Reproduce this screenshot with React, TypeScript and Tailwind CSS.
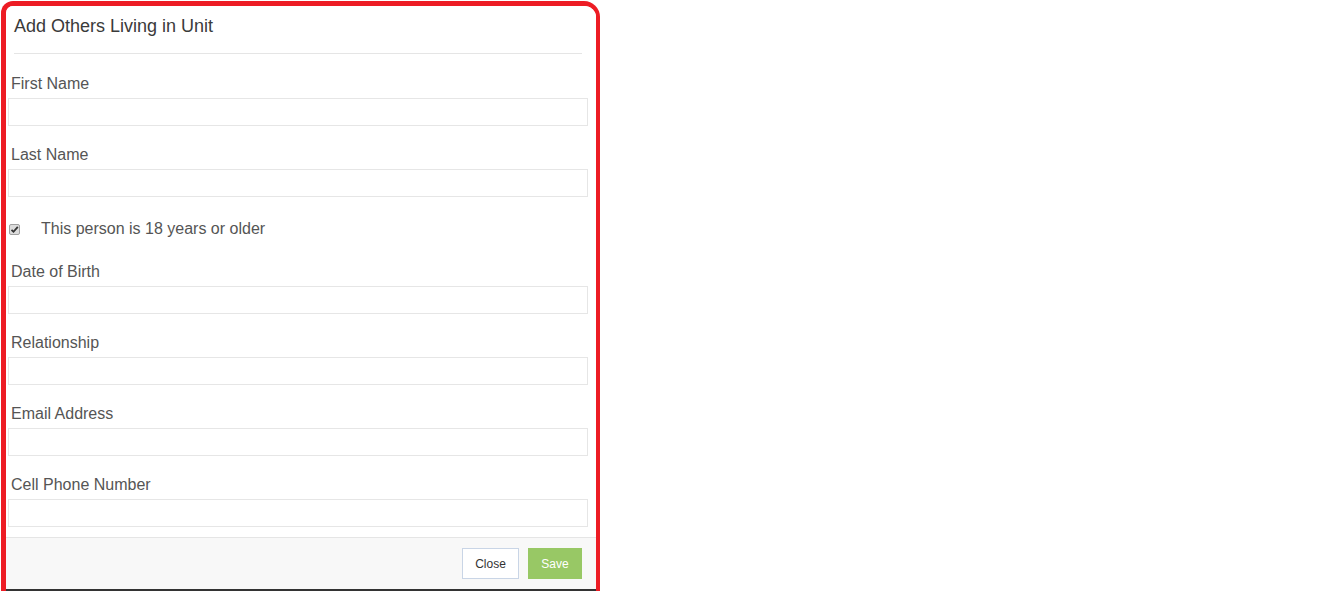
import React from "react";

const fields = ["First Name", "Last Name"];
const moreFields = ["Date of Birth", "Relationship", "Email Address", "Cell Phone Number"];

function Field({ label, first }: { label: string; first?: boolean }) {
  return (
    <div className={first ? "mt-[20px]" : "mt-[19px]"}>
      <label className="block ml-[5px] text-[16px] leading-[20px] text-[#555]">{label}</label>
      <input
        type="text"
        className="block mt-[4px] ml-[2px] w-[580px] h-[28px] border border-[#e6e6e6] bg-white outline-none"
      />
    </div>
  );
}

export default function App() {
  return (
    <div className="w-[1320px] h-[591px] bg-white font-['Liberation_Sans',Arial,sans-serif]">
      <div className="ml-px mt-px w-[599px] h-[590px] flex flex-col border-t-[5px] border-l-[5px] border-r-[4px] border-[#ed1c24] rounded-tl-[12px] rounded-tr-[16px] overflow-hidden">
        <div className="flex-1 bg-white">
          <h4 className="ml-[8px] mt-[10px] text-[18px] leading-[20px] text-[#3a3a3a]">Add Others Living in Unit</h4>
          <div className="mt-[17px] ml-[8px] mr-[14px] border-t border-[#e5e5e5]" />
          {fields.map((f, i) => (
            <Field key={f} label={f} first={i === 0} />
          ))}
          <div className="mt-[22px] h-[20px] flex items-center">
            <span className="ml-[3px] w-[11px] h-[11px] rounded-[2px] border border-[#a0a0a0] bg-[#dcdcdc] flex items-center justify-center">
              <svg width="9" height="9" viewBox="0 0 9 9">
                <path d="M1.5 4.8 L3.5 6.8 L7.8 1.8" stroke="#333" strokeWidth="1.8" fill="none" />
              </svg>
            </span>
            <span className="ml-[21px] text-[16px] leading-[20px] text-[#555]">This person is 18 years or older</span>
          </div>
          <div className="pt-[4px]">
            {moreFields.map((f) => (
              <Field key={f} label={f} />
            ))}
          </div>
        </div>
        <div className="h-[52px] border-t border-[#e5e5e5] bg-[#f8f8f8] flex justify-end items-start pt-[10px] pr-[14px] gap-[9px]">
          <button className="w-[57px] h-[31px] border border-[#c9d5e6] bg-white text-[12px] text-[#333]">Close</button>
          <button className="w-[54px] h-[31px] bg-[#98c865] text-[12px] text-white">Save</button>
        </div>
        <div className="h-[2px] bg-[#333]" />
      </div>
    </div>
  );
}
